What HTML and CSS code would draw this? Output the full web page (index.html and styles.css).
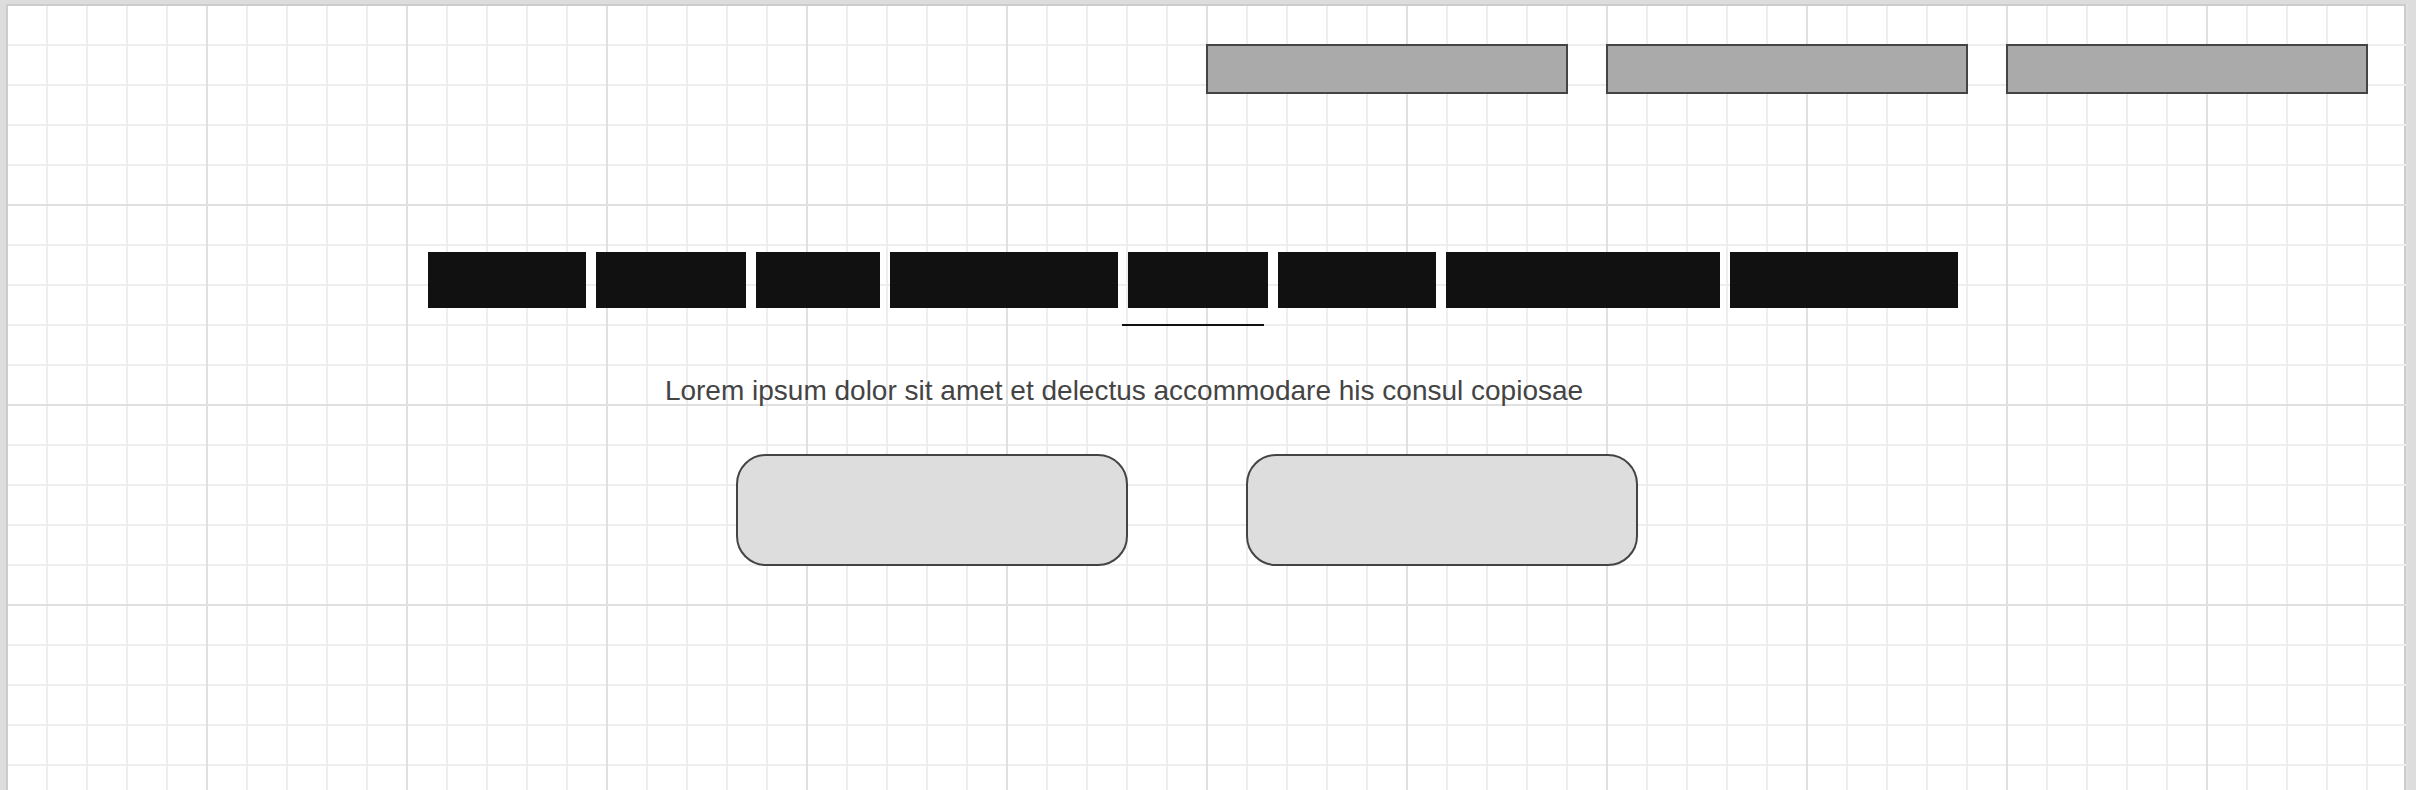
FILE: index.html
```html
<!DOCTYPE html>
<html lang="en">
<head>
<meta charset="utf-8">
<meta name="viewport" content="width=device-width, initial-scale=1">
<title>Wireframe</title>
<link rel="stylesheet" href="styles.css">
</head>
<body>
<div class="sheet">
  <nav class="nav" aria-label="Main">
    <a class="nav-item" href="#one" aria-label="First section"></a>
    <a class="nav-item" href="#two" aria-label="Second section"></a>
    <a class="nav-item" href="#three" aria-label="Third section"></a>
  </nav>
  <main class="hero">
    <h1 class="title" aria-label="Title">
      <span class="word word-l"></span>
      <span class="word word-m"></span>
      <span class="word word-xs"></span>
      <span class="word word-xl"></span>
      <span class="word word-s"></span>
      <span class="word word-l"></span>
      <span class="word word-xxl"></span>
      <span class="word word-xl"></span>
    </h1>
    <hr class="rule">
    <p class="lead">Lorem ipsum dolor sit amet et delectus accommodare his consul copiosae</p>
    <div class="actions">
      <button class="action" type="button" aria-label="Primary action"></button>
      <button class="action" type="button" aria-label="Secondary action"></button>
    </div>
  </main>
</div>
</body>
</html>
```

FILE: styles.css
```css
* {
  box-sizing: border-box;
}

body {
  margin: 0;
  padding: 4px 10px 0 6px;
  background: #ddd;
  color: #444;
  font-family: "Liberation Sans", Arial, sans-serif;
}

/* The right edge is the lowest background layer, so the grid runs over it. */
.sheet {
  min-height: calc(100vh - 4px);
  padding: 38px 38px 40px 36px;
  border: solid #ccc;
  border-width: 2px 0 0 2px;
  box-shadow: 2px 0 0 #e0e0e0;
  background-color: #fff;
  background-image:
    linear-gradient(90deg, #e0e0e0 2px, transparent 2px),
    linear-gradient(#e0e0e0 2px, transparent 2px),
    linear-gradient(90deg, #eee 2px, transparent 2px),
    linear-gradient(#eee 2px, transparent 2px),
    linear-gradient(90deg, transparent calc(100% - 2px), #ccc calc(100% - 2px));
  background-size: 200px 200px, 200px 200px, 40px 40px, 40px 40px, 100% 100%;
  background-position: -2px -2px, -2px -2px, -2px -2px, -2px -2px, 0 0;
}

.nav {
  display: flex;
  justify-content: flex-end;
  gap: 38px;
}

.nav-item {
  width: 362px;
  height: 50px;
  border: 2px solid #444;
  background: #aaa;
}

.hero {
  display: flex;
  flex-direction: column;
  align-items: center;
  padding-top: 158px;
  padding-right: 26px;
}

.title {
  display: flex;
  gap: 10px;
  margin: 0;
}

.word {
  height: 56px;
  background: #111;
}

.word-xs { width: 124px; }
.word-s { width: 140px; }
.word-m { width: 150px; }
.word-l { width: 158px; }
.word-xl { width: 228px; }
.word-xxl { width: 274px; }

.rule {
  width: 142px;
  height: 2px;
  margin: 16px 0 0;
  border: 0;
  background: #111;
}

.lead {
  margin: 49px 0 47px;
  padding-right: 138px;
  font-size: 28px;
  line-height: 32px;
}

.actions {
  display: flex;
  gap: 118px;
  padding-right: 12px;
}

.action {
  width: 392px;
  height: 112px;
  border: 2px solid #444;
  border-radius: 30px;
  background: #ddd;
}
```
